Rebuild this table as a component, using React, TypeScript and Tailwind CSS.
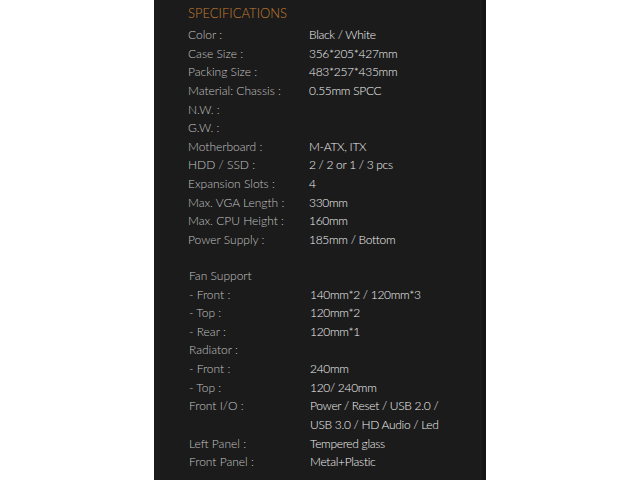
const specs: [string, string][] = [
  ["Color :", "Black / White"],
  ["Case Size :", "356*205*427mm"],
  ["Packing Size :", "483*257*435mm"],
  ["Material: Chassis :", "0.55mm SPCC"],
  ["N.W. :", ""],
  ["G.W. :", ""],
  ["Motherboard :", "M-ATX, ITX"],
  ["HDD / SSD :", "2 / 2 or 1 / 3 pcs"],
  ["Expansion Slots :", "4"],
  ["Max. VGA Length :", "330mm"],
  ["Max. CPU Height :", "160mm"],
  ["Power Supply :", "185mm / Bottom"],
];

const cooling: [string, string][] = [
  ["Fan Support", ""],
  ["- Front :", "140mm*2 / 120mm*3"],
  ["- Top :", "120mm*2"],
  ["- Rear :", "120mm*1"],
  ["Radiator :", ""],
  ["- Front :", "240mm"],
  ["- Top :", "120/ 240mm"],
  ["Front I/O :", "Power / Reset / USB 2.0 /"],
  ["", "USB 3.0 / HD Audio / Led"],
  ["Left Panel :", "Tempered glass"],
  ["Front Panel :", "Metal+Plastic"],
];

function Row({ label, value }: { label: string; value: string }) {
  return (
    <div className="grid grid-cols-[121px_1fr] h-[18.65px] leading-[18.65px] whitespace-nowrap">
      <span className="text-[#c2c2c2]">{label}</span>
      <span className="text-[#f2f2f2] tracking-[-0.3px]">{value}</span>
    </div>
  );
}

export default function App() {
  return (
    <div className="w-full h-[480px] bg-white flex justify-center overflow-hidden">
      <div
        className="w-[332px] h-full bg-[#1b1b1b] border-r-4 border-[#151515] pl-[34px] pt-[3px] text-[12px] font-light"
        style={{ fontFamily: "Lato, 'Open Sans', sans-serif" }}
      >
        <h2 className="text-[13px] leading-[20px] text-[#c47b33] font-light">SPECIFICATIONS</h2>
        <div className="mt-[3px] flex flex-col">
          {specs.map(([l, v], i) => (
            <Row key={i} label={l} value={v} />
          ))}
        </div>
        <div className="mt-[17.2px] flex flex-col pl-[1px]">
          {cooling.map(([l, v], i) => (
            <Row key={i} label={l} value={v} />
          ))}
        </div>
      </div>
    </div>
  );
}
